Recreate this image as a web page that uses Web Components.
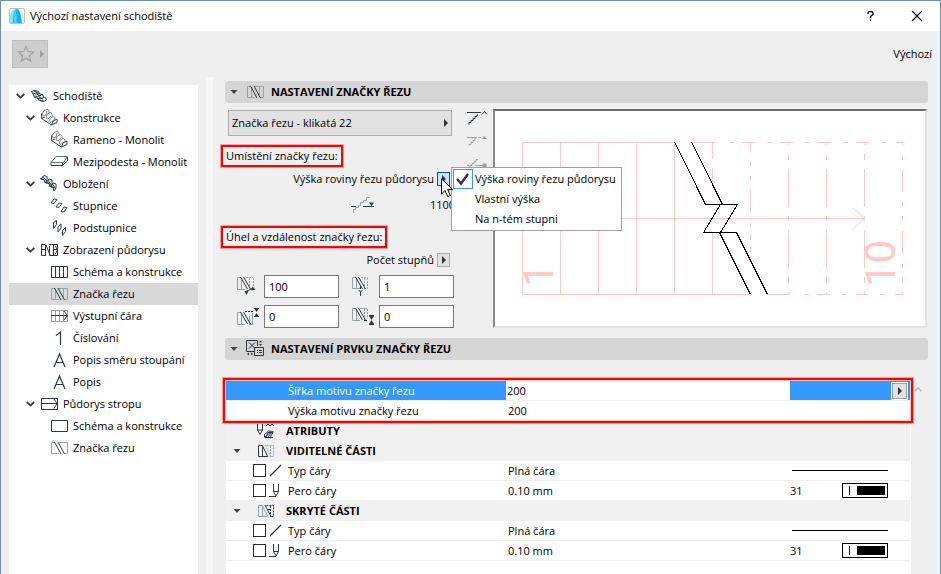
<!DOCTYPE html>
<html lang="cs">
<head>
<meta charset="utf-8">
<title>Výchozí nastavení schodiště</title>
<style>
  html { height: 100%; }
  body { margin: 0; min-height: 100%; display: flex; font: 11px/16px "Open Sans", "Noto Sans", sans-serif; color: #000; background: #efefef; }
</style>
</head>
<body>
<stair-dialog></stair-dialog>

<script>
const INK = '#2b383e', PALE = '#9aa0a3';
const line = (d, c = INK, extra = '') => `<path d="${d}" fill="none" stroke="${c}" ${extra}/>`;
const slash = (c = INK) => line('M3.500 0l7 12M6.500 0l7 12', c);

/* name: [width, height, markup] */
const ICONS = {
  app: [16, 16, `<rect x=".5" y=".5" width="15" height="15" rx="1" fill="#f4f6f7" stroke="#b9c0c4"/><path d="M1 15V11C1 5 3 1 7 1L5 15z" fill="#7fe3fb"/><path d="M4 15C4 7 5 1 8 1c3 0 4 7 5 14z" fill="#12b5e8"/><path d="M5 15C5 9 5 4 7 2L8 15z" fill="#55d3f6"/>`],
  star: [16, 16, `<path d="M8 .5l2.200 5 5.300.5-4 3.700 1.200 5.300L8 12.300 3.300 15l1.200-5.300L.5 6l5.300-.5z" fill="none" stroke="#a0a0a0" stroke-width="1.200"/>`],
  right: [5, 8, `<path d="M1 0l4 4-4 4z" fill="currentColor"/>`],
  down: [8, 4, `<path d="M.5 0h7L4 4z" fill="currentColor"/>`],
  chevron: [9, 6, `<path d="M.7 1l3.800 3.600L8.300 1" fill="none" stroke="#3d3d3d" stroke-width="1.800"/>`],
  stair: [17, 12, line('M.5 1.500L3.500.500l4 1 1 2.500 3 .5 1 2.500 2 .5 1 2.500-3 1.500-5-1.500-1-2-3-.5-1-2.500z') + line('M2 3l3 1 3.500-.500M3.500 6l3 .500 4-1.500M6 8.500l3 .500 4-1.500M9.500 11l3-.500M3 1l4 2M5.500 4l4 2M8 7l4 2')],
  monolith: [19, 18, line('M4 1.500l3-1 2 1v3M4 1.500L2 5l1 2 3-1 1-4M7 5.500l3-2 2 1v3M7 5.500L6 9l2 1 3-3M10 9.500l3-2 2 1v3M10 9.500l-1 3 2 1 3-3', '#7e8588') + line('M1.500 4.500v5l10 6.500 5.500-2.500V10L13 12l-1.500 4M1.500 9.500L5 8', '#3c474c')],
  slab: [19, 12, line('M1 6.500l5-6h11.500l-4 6z', '#6b7377') + line('M1 6.500v3h11.500l5-4.500V1M12.500 7v3', '#3c474c')],
  cladding: [19, 18, line('M1 4l3-3.500 3 1V5L5 8 4 4.500zM6 8l3-4 3 1v4l-2 3-1-4zM11 12l2-4 3 1v4l-2 3-1-4z') + line('M0 3.500l4 1M5 7.500l4 1M10 11.500l4 1M3 1.500l4 5M8 5l3 5M12.500 9l3 5')],
  treads: [19, 16, line('M1 5L4 1l3 .500-3 4zM6 9l3-4 3 .500-3 4zM11 13.500l3-4.500 3 .500-3 4.500z', '#3c474c')],
  risers: [15, 16, line('M1.500 6V2.500L4.500.500v4l-3 4zM6 10V6.500l3-2.500v4l-3 4zM10.500 14v-3.500l3-3v4l-3 4z', '#2f3b41')],
  plan: [17, 12, line('M.5.500V11.500M.5.500H4M.5 11.500H5M4.500.500V11M.5 5.500H4M8.500 2V11.500M8.500 11.500H16.500V.500H8M12.500.500V11.500M5 1l4 10M14 1.500l2.500 4.500L14 10.500M12 5.500h4')],
  scheme: [17, 12, line('M.5.500h16v11H.500zM4.500.500v11M8.500.500v11M12.500.500v11')],
  cut: [17, 12, line('M.5.500V11.500H8M.5.500H3.500M4.500 1v10M8 .5H16.500V11.500H13M12.500 1v8', PALE) + line('M3.500 0l6.500 12M7 0l6.500 12')],
  cut2: [17, 12, line('M.5.500V11.500H8M.5.500H3.500M8 .5H16.500V11.500H13', PALE) + line('M3.500 0l6.500 12M7 0l6.500 12')],
  walk: [17, 12, line('M.5.500h16v11H.500zM4.500.500v11M8.500.500v11M12.500.500v11', PALE) + line('M0 5.500h16M13 1l3.500 4.500L13 10')],
  one: [9, 14, line('M1 4.500L5.500 1v13', INK, 'stroke-width="1.200"')],
  letter: [13, 14, line('M1 14L6.500 1 12 14M3 9.500h7', INK, 'stroke-width="1.200"')],
  slabplan: [17, 12, line('M.5.500h16v11H.500zM0 5.500h16M13 1l3 4.500-3 5')],
  rect: [17, 12, line('M.5.500h16v11H.500z')],
  above: [20, 15, line('M0 1.500h14M2 13.500v-2h2v-2h2v-2h2v-2h2V4h1') + line('M15 3.500l2.500-3L20 3.500')],
  middle: [20, 11, line('M0 1.500h10M11 1.500h3M2 9.500v-1h2v-2h2v-2h2V2', PALE) + `<path d="M15 3l2.500-3L20 3z" fill="${PALE}"/>`],
  below: [20, 11, line('M0 6.500h2M3 9V6.500h2v-2h2v-2h2v-2h2M8 6.500h8', PALE) + `<circle cx="17.500" cy="6.500" r="2.300" fill="${PALE}"/>`],
  level: [24, 16, line('M2.500 16v-3.500h2v-2h3v-2h2v-3h3v-2h3V.500h3', PALE) + line('M0 9.500h5M12 9.500h11') + `<path d="M18 5.500h5L20.500 9z" fill="${INK}"/>`],
  angle: [19, 19, line('M4 .5H.500V12.500H8M4.500 1v11', PALE) + line('M9 .5h7M12.500 1v8M16.500 1v8', PALE, 'stroke-dasharray="2 1"') + slash() + line('M9 14.500l6-3') + `<path d="M7.500 14h4L9.500 18zM14 13.500l1.500-4 3 3z" fill="${INK}"/>`],
  stepcount: [17, 19, line('M4 .5H.500V11.500H8M4.500 1v11', PALE) + line('M9 .5h6.500M12.500 1v11M15.500 1v10.500H12', PALE, 'stroke-dasharray="2 1"') + slash() + line('M8.500 9v3M6.500 13l2 2 2-2M8.500 15v4')],
  gaptop: [22, 17, line('M4 4.500H.500V16.500H8M4.500 5v11M12 16.500h4M15.500 5v11M12.500 8v8', PALE) + `<g transform="translate(0 4)">${slash()}</g>` + line('M8 3.500h9', INK, 'stroke-dasharray="2 1"') + `<path d="M17 0h5l-2.500 4zM17 9h5l-2.500-4z" fill="${INK}"/>` + line('M17 .5h5M17 8.500h5')],
  gapbot: [22, 17, line('M4 .5H.500V12.500H8M4.500 1v11M8 .5h7', PALE) + line('M12.500 1v11M15.500 1v9', PALE, 'stroke-dasharray="2 1"') + slash() + line('M17 7.500h5M17 16.500h5M12 12.500h3') + `<path d="M17 8h5l-2.500 4zM17 16h5l-2.500-4z" fill="${INK}"/>`],
  component: [19, 18, line('M8 11.500H.500V.500h11V6M3 2.500l6 6M9 2.500l-6 6') + line('M8.500 7.500h9v8h-9zM11 10.500h1M13 10.500h3M11 12.500h1M13 12.500h3') + `<path d="M13 2.500l1.500-2 1.500 2zM13 4l1.500 2L16 4zM3 12.500v3L1 14zM5 12.500v3l2-1.500z" fill="${INK}"/>`],
  attrs: [18, 16, line('M1.500 0v7h5V0M1.500 7L4 11.500 6.500 7') + line('M10 3l2-2 2 2 2-2 2 2M8.500 14.500v-3l4-3.500 5 .5M10 14.500l2-5h5l-3 5zM9 14.500h8') + line('M9 14l6-5M12 14l4-5')],
  visible: [16, 12, line('M4 .5H.500V11.500H9M4.500 1v11M4 0l6 12') + line('M7 0l6 11.500M8.500.500h7v11H12M12.500 1v11', PALE, 'stroke-dasharray="2 1"')],
  hidden: [16, 12, line('M4 .5H.500V11.500H9M4.500 1v11M4 0l6 12', PALE) + line('M7 0l6 11.500') + line('M8.500.500h7v11H12M12.500 1v11M10 4.500h3', INK, 'stroke-dasharray="2 1"')],
  line: [11, 12, line('M0 11L11 0', INK, 'stroke-width="1.200"')],
  pen: [13, 14, line('M4.500 0v7.500h5V0M4.500 7.500L7 12l2.500-4.500M0 12.500h7')],
  check: [14, 12, line('M1 6l4 4.500L12 1', INK, 'stroke-width="2.400"')],
  help: [8, 10, line('M1 3V1.500L2 .7h3l1 1V3.500L3.500 5.500V7M3.500 8.500v1.500', '#000', 'stroke-width="1.300"')],
  close: [10, 10, line('M0 0l10 10M10 0L0 10', '#000', 'stroke-width="1.100"')],
  up: [8, 5, line('M.5 4.500L4 1l3.500 3.500', '#bdbdbd', 'stroke-width="1.600"')],
  cursor: [13, 20, `<path d="M.5 .8v15.200l3.600-3.400 2.600 6 2.600-1.100-2.600-5.900h5z" fill="#fff" stroke="#000"/>`],
};

function define(name, html, setup) {
  const t = document.createElement('template');
  t.innerHTML = html;
  customElements.define(name, class extends HTMLElement {
    connectedCallback() {
      if (this.shadowRoot) return;
      const root = this.attachShadow({ mode: 'open' });
      root.append(t.content.cloneNode(true));
      if (setup) setup(root, this);
    }
  });
}

define('ui-icon', `<style>:host{display:inline-flex;flex:none;align-items:center;justify-content:center}svg{display:block;overflow:visible}</style>`, (root, el) => {
  const [w, h, m] = ICONS[el.getAttribute('name')];
  root.innerHTML += `<svg width="${w}" height="${h}" viewBox="0 0 ${w} ${h}" aria-hidden="true">${m}</svg>`;
});

define('flyout-button', `<style>
  :host{display:inline-flex;flex:none}
  button{box-sizing:border-box;width:13px;height:14px;padding:0;border:1px solid #adadad;background:#e1e1e1;color:#333;display:flex;align-items:center;justify-content:center}
  :host([active]) button{border-color:#005499;background:#cce4f7}
  :host([framed]) button{width:15px;height:16px;margin:1px 0;border-color:#a0a0a0;outline:1px solid #fff}
</style><button type="button"><ui-icon name="right"></ui-icon></button>`, (root, el) =>
  root.querySelector('button').setAttribute('aria-label', el.getAttribute('label')));

define('title-bar', `<style>
  :host{display:flex;align-items:center;height:30px;background:#fff;padding:0 0 0 8px}
  .t{flex:1;margin-left:5px}
  button{border:0;background:none;padding:0;width:46px;height:30px;display:flex;align-items:center;justify-content:center}
</style><ui-icon name="app"></ui-icon><span class="t"><slot></slot></span>
<button type="button" aria-label="Nápověda"><ui-icon name="help"></ui-icon></button>
<button type="button" aria-label="Zavřít"><ui-icon name="close"></ui-icon></button>`);

define('tool-bar', `<style>
  :host{display:flex;align-items:center;justify-content:space-between;padding:9px 8px 9px 11px}
  button{box-sizing:border-box;width:36px;height:28px;padding:0 3px 0 5px;display:flex;align-items:center;justify-content:space-between;background:#cdcdcd;border:1px solid #bfbfbf;color:#a0a0a0}
</style><button type="button" aria-label="Oblíbené"><ui-icon name="star"></ui-icon><ui-icon name="right"></ui-icon></button><span><slot></slot></span>`);

define('tree-item', `<style>
  :host{display:flex;align-items:center;height:22px}
  :host([selected]){background:#d9d9d9}
  :host([level="1"]){padding-left:10px}
  :host([level="2"]){padding-left:20px}
  button{border:0;background:none;padding:0;width:9px;height:16px;margin:0 3px 0 7px;display:flex;align-items:center}
  .gap{width:19px}
  .i{width:21px;margin:0 3px 0 1px;display:flex;justify-content:center}
</style><button type="button" aria-label="Rozbalit"><ui-icon name="chevron"></ui-icon></button><span class="i"></span><span><slot></slot></span>`, (root, el) => {
  root.querySelector('.i').innerHTML = `<ui-icon name="${el.getAttribute('icon')}"></ui-icon>`;
  el.setAttribute('role', 'treeitem');
  if (el.getAttribute('level') === '2') {
    const gap = document.createElement('span');
    gap.className = 'gap';
    root.querySelector('button').replaceWith(gap);
  }
});

define('settings-tree', `<style>:host{display:block;background:#fff}</style><slot></slot>`, (root, el) => el.setAttribute('role', 'tree'));

define('panel-header', `<style>
  :host{display:block}
  h2{margin:0;height:22px;border-radius:3px;background:#d5d5d5;display:flex;align-items:center;font-size:11px;line-height:16px;font-weight:700}
  button{border:0;background:none;padding:0;width:18px;height:22px;display:flex;align-items:center;justify-content:center;color:#444}
  .ico{width:21px;margin:0 5px 0 2px;display:flex;justify-content:center}
</style><h2><button type="button" aria-label="Sbalit"><ui-icon name="down"></ui-icon></button><span class="ico"><slot name="icon"></slot></span><slot></slot></h2>`);

define('marked-label', `<style>
  :host{display:block;width:max-content;border:2px solid #f00;box-shadow:0 0 0 1px #f9a0a0;padding:1px 3px;line-height:16px;background:#f1f1f1}
</style><slot></slot>`);

define('number-field', `<style>
  :host{display:flex;min-width:0}
  label{display:flex;flex:1;align-items:center}
  ui-icon{width:21px;margin-right:6px;justify-content:flex-start}
  input{box-sizing:border-box;width:75px;height:23px;border:1px solid #7a7a7a;background:#fff;padding:0 4px;font:inherit;color:inherit;border-radius:0}
</style><label></label>`, (root, el) => {
  root.querySelector('label').innerHTML = `<ui-icon name="${el.getAttribute('icon')}"></ui-icon><input type="text" aria-label="${el.getAttribute('label')}" value="${el.getAttribute('value')}">`;
});

define('choice-menu', `<style>
  :host{display:block;background:#fff;border:1px solid #a0a0a8;padding:1px;width:max-content;box-sizing:border-box}
  button{display:flex;align-items:center;width:100%;height:20px;border:0;background:none;padding:0 4px 0 0;font:inherit;color:inherit;white-space:nowrap}
  .c{width:18px;height:18px;border:1px solid transparent;margin-right:2px;display:flex;align-items:center;justify-content:center}
  .on .c{border-color:#3399ff}
</style><div role="menu">
  <button type="button" role="menuitemradio" aria-checked="true" class="on"><span class="c"><ui-icon name="check"></ui-icon></span>Výška roviny řezu půdorysu</button>
  <button type="button" role="menuitemradio" aria-checked="false"><span class="c"></span>Vlastní výška</button>
  <button type="button" role="menuitemradio" aria-checked="false"><span class="c"></span>Na n-tém stupni</button>
</div>`);

const solidX = [522, 560, 598, 636, 674], dashX = [788, 826, 864];
const PINK = [
  'M522 142.500H675M691 142.500H715M522 294.500H750M767 294.500H790M522 218.500H864',
  ...solidX.map(x => `M${x}.5 142V294`),
  'M712.500 142V159M712.500 168V184M712.500 233V294',
  'M750.500 142V152M750.500 161V166M750.500 176V180M750.500 190V213M750.500 223V227M750.500 234V240M750.500 247V252M750.500 257V261',
  ...dashX.map(x => `M${x}.5 142V145M${x}.5 154V160M${x}.5 169V207M${x}.5 216V221M${x}.5 230V268M${x}.5 277V283M${x}.5 292V295`),
  'M902.500 142V145M902.500 155V160M902.500 170V192M902.500 202V207M902.500 216V221M902.500 231V254M902.500 264V268M902.500 277V283M902.500 292V295',
  ...[750, 788, 826, 864].map(x => `M${x - 21} 142.500h5M${x - 8} 142.500h13`),
  'M881 142.500h5M896 142.500h7',
  ...[826, 864].map(x => `M${x - 22} 294.500h5M${x - 8} 294.500h12`),
  'M880 294.500h5M895 294.500h8',
].join('');
define('stair-preview', `<style>
  :host{display:block;background:#fff;border:2px solid #e3e3e3;border-top-color:#696969;border-left-color:#8a8a8a;min-width:0;box-sizing:border-box}
  svg{display:block;width:100%;height:0;min-height:100%}
  text{font-family:Roboto,Arial,sans-serif;font-size:42px;fill:#ffc9c9}
</style><svg viewBox="495 111 430 215" role="img" aria-label="Náhled značky řezu">
  <path d="${PINK}" stroke="#ffc9c9" fill="none" shape-rendering="crispEdges"/>
  <path d="M853 208L864.500 218.500 852 230" stroke="#ffc9c9" fill="none"/>
  <text transform="translate(553 287) rotate(-90)">1</text>
  <text transform="translate(895 287) rotate(-90)">10</text>
  <path d="M674.500 142L705.500 204.500H737.500L720.500 232.500M691.500 142L722.500 204.500M720.500 204.500L703.500 232.500H736.500L767.500 294.500M719.500 232.500L750.500 294.500" stroke="#000" fill="none" shape-rendering="crispEdges"/>
</svg>`);

define('cut-settings', `<style>
  :host{display:grid;grid-template-columns:226px 26px minmax(0,1fr);column-gap:8px;padding:6px 1px 10px 3px}
  .form{display:flex;flex-direction:column}
  .combo{position:relative;display:block;color:#333;margin-top:1px;width:224px}
  select{appearance:none;display:block;box-sizing:border-box;width:100%;height:26px;border:1px solid #adadad;background:#e1e1e1;padding:0 14px 0 3px;font:inherit;color:#000;border-radius:0}
  .combo ui-icon{position:absolute;right:4px;top:9px}
  marked-label{margin:9px 0 0 -7px}
  .row{display:flex;align-items:center;justify-content:flex-end;gap:3px;height:24px;padding-right:4px;position:relative}
  .lvl{height:28px;padding:0;gap:55px}
  .lvl span{width:24px}
  choice-menu{position:absolute;left:223px;top:0;z-index:2}
  .ptr{position:absolute;left:213px;top:11px;z-index:3}
  .lvl + marked-label{margin-top:7px}
  .fields{display:grid;grid-template-columns:auto auto;justify-content:space-between;row-gap:7px;margin:3px 0 0 9px}
  .modes{display:flex;flex-direction:column;gap:6px;padding:1px 0 0 4px}
  .modes button{border:0;background:none;padding:0;width:22px;height:17px;display:flex;align-items:center;justify-content:center}
  stair-preview{margin-left:-3px}
</style>
<div class="form">
  <span class="combo"><select aria-label="Typ značky řezu"><option>Značka řezu - klikatá 22</option></select><ui-icon name="right"></ui-icon></span>
  <marked-label>Umístění značky řezu:</marked-label>
  <div class="row"><span>Výška roviny řezu půdorysu</span><flyout-button active label="Výška roviny řezu půdorysu"></flyout-button><choice-menu></choice-menu><ui-icon class="ptr" name="cursor"></ui-icon></div>
  <div class="row lvl"><ui-icon name="level"></ui-icon><span>1100</span></div>
  <marked-label>Úhel a vzdálenost značky řezu:</marked-label>
  <div class="row"><span>Počet stupňů</span><flyout-button label="Počet stupňů"></flyout-button></div>
  <div class="fields">
    <number-field icon="angle" label="Úhel" value="100"></number-field>
    <number-field icon="stepcount" label="Počet stupňů" value="1"></number-field>
    <number-field icon="gaptop" label="Horní odsazení" value="0"></number-field>
    <number-field icon="gapbot" label="Dolní odsazení" value="0"></number-field>
  </div>
</div>
<div class="modes">
  <button type="button" aria-label="Nad řezem"><ui-icon name="above"></ui-icon></button>
  <button type="button" aria-label="V řezu"><ui-icon name="middle"></ui-icon></button>
  <button type="button" aria-label="Pod řezem"><ui-icon name="below"></ui-icon></button>
</div>
<stair-preview></stair-preview>`);

const partRows = (id) => `
  <tr><td class="k"><div><input type="checkbox" id="${id}t"><ui-icon name="line"></ui-icon></div></td><th scope="row"><label for="${id}t">Typ čáry</label></th><td class="v">Plná čára</td><td><div class="ln"></div></td></tr>
  <tr><td class="k"><div><input type="checkbox" id="${id}p"><ui-icon name="pen"></ui-icon></div></td><th scope="row"><label for="${id}p">Pero čáry</label></th><td class="v">0.10 mm</td><td><div class="pen">31<span class="sw"><i></i><b></b></span></div></td></tr>`;
const group = (icon, name, arrow = true) => `
  <tr class="g"><td><div class="gi">${arrow ? '<button type="button" aria-label="Sbalit"><ui-icon name="down"></ui-icon></button>' : ''}<ui-icon name="${icon}"></ui-icon></div></td><th scope="rowgroup" colspan="3">${name}</th></tr>`;
define('property-table', `<style>
  :host{display:flex;align-items:stretch;flex:1;padding:21px 0 0 1px}
  .box{position:relative;flex:1;min-width:0;background:#fff;padding-right:1px}
  .mark{position:absolute;box-sizing:border-box;left:-3px;right:-2px;top:-3px;height:45px;border:2px solid #f00;box-shadow:0 0 0 1px #f9a0a0,inset 0 0 0 1px #fbc4c4;pointer-events:none}
  table{width:100%;border-collapse:separate;border-spacing:0;table-layout:fixed}
  td,th{height:19px;padding:0;border-bottom:1px solid #efefef;text-align:left;font-weight:400;line-height:16px;vertical-align:middle;white-space:nowrap}
  th{padding-left:2px}
  .v{padding-left:2px}
  .sel td,.sel th{background:#3399ff;color:#fff}
  .sel .v{background:#fff;padding:0}
  .sel input{box-sizing:border-box;width:100%;height:19px;border:0;padding:0 1px;font:inherit;background:#fff;display:block}
  .sel div{display:flex;justify-content:flex-end;padding-right:3px}
  .g td,.g th{background:#f1f1f1}
  .g th{font-weight:700;padding:0}
  .gi{display:flex;align-items:center;justify-content:flex-end;padding-right:12px;height:16px}
  .gi button{border:0;background:none;color:#444;padding:0 7px;margin-right:auto;height:16px;display:flex;align-items:center}
  .k div{display:flex;align-items:center;gap:3px;padding-left:27px;height:16px}
  .k ui-icon{width:13px}
  input[type=checkbox]{appearance:none;box-sizing:border-box;width:13px;height:13px;margin:0;border:1px solid #2b2b2b;background:#fff}
  .ln{height:1px;background:#000;margin:0 22px 0 2px}
  .pen{display:flex;align-items:center;justify-content:space-between;margin-right:22px}
  .sw{box-sizing:border-box;width:46px;height:15px;border:1px solid #000;display:flex;align-items:center;justify-content:space-between;padding:0 2px 0 6px}
  .sw i{width:1px;height:9px;background:#000}.sw b{width:28px;height:9px;background:#000}
  .sc{width:17px;border:0;background:none;padding:6px 3px;display:flex;align-items:flex-start;height:22px}
</style>
<div class="box">
<table><colgroup><col style="width:60px"><col style="width:220px"><col><col style="width:120px"></colgroup>
<tbody>
  <tr class="sel"><td></td><th scope="row"><label for="w">Šířka motivu značky řezu</label></th><td class="v"><input type="text" id="w" value="200"></td><td><div><flyout-button framed label="Další volby"></flyout-button></div></td></tr>
  <tr><td></td><th scope="row">Výška motivu značky řezu</th><td class="v">200</td><td></td></tr>
</tbody>
<tbody>${group('attrs', 'ATRIBUTY', false)}</tbody>
<tbody>${group('visible', 'VIDITELNÉ ČÁSTI')}${partRows('v')}</tbody>
<tbody>${group('hidden', 'SKRYTÉ ČÁSTI')}${partRows('h')}</tbody>
</table><div class="mark"></div></div>
<button class="sc" type="button" aria-label="Posunout nahoru"><ui-icon name="up"></ui-icon></button>`);

define('stair-dialog', `<style>
  :host{display:flex;flex-direction:column;flex:1;min-width:0;border:1px solid #6d8fb0;border-bottom:0}
  .main{flex:1;display:grid;grid-template-columns:197px 15px minmax(0,1fr)}
  settings-tree{margin:8px 0 0 8px}
  .split{width:7px;background:#f7f7f7;justify-self:end}
  section{display:flex;flex-direction:column;padding:4px 12px 0 12px;min-width:0}
</style>
<title-bar>Výchozí nastavení schodiště</title-bar>
<tool-bar>Výchozí</tool-bar>
<div class="main">
  <settings-tree>
    <tree-item level="0" icon="stair">Schodiště</tree-item>
    <tree-item level="1" icon="monolith">Konstrukce</tree-item>
    <tree-item level="2" icon="monolith">Rameno - Monolit</tree-item>
    <tree-item level="2" icon="slab">Mezipodesta - Monolit</tree-item>
    <tree-item level="1" icon="cladding">Obložení</tree-item>
    <tree-item level="2" icon="treads">Stupnice</tree-item>
    <tree-item level="2" icon="risers">Podstupnice</tree-item>
    <tree-item level="1" icon="plan">Zobrazení půdorysu</tree-item>
    <tree-item level="2" icon="scheme">Schéma a konstrukce</tree-item>
    <tree-item level="2" icon="cut" selected>Značka řezu</tree-item>
    <tree-item level="2" icon="walk">Výstupní čára</tree-item>
    <tree-item level="2" icon="one">Číslování</tree-item>
    <tree-item level="2" icon="letter">Popis směru stoupání</tree-item>
    <tree-item level="2" icon="letter">Popis</tree-item>
    <tree-item level="1" icon="slabplan">Půdorys stropu</tree-item>
    <tree-item level="2" icon="rect">Schéma a konstrukce</tree-item>
    <tree-item level="2" icon="cut2">Značka řezu</tree-item>
  </settings-tree>
  <div class="split"></div>
  <section>
    <panel-header><ui-icon slot="icon" name="cut"></ui-icon>NASTAVENÍ ZNAČKY ŘEZU</panel-header>
    <cut-settings></cut-settings>
    <panel-header><ui-icon slot="icon" name="component"></ui-icon>NASTAVENÍ PRVKU ZNAČKY ŘEZU</panel-header>
    <property-table></property-table>
  </section>
</div>`);
</script>
</body>
</html>
